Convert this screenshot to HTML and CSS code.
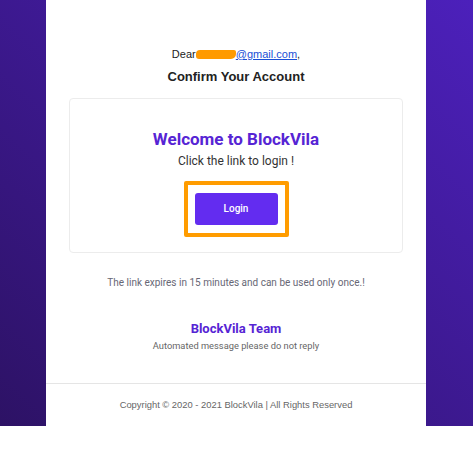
FILE: index.html
```html
<!DOCTYPE html>
<html lang="en">

<head>
  <meta charset="utf-8">
  <title>Confirm Your Account</title>
  <link rel="stylesheet" href="styles.css">
</head>

<body>
  <div class="backdrop">
    <div class="mail">
      <!-- greeting -->
      <p class="dear">Dear <span class="redact"></span><a href="#">@gmail.com</a>,</p>
      <h1 class="confirm">Confirm Your Account</h1>

      <!-- main card -->
      <div class="card">
        <h2 class="welcome">Welcome to BlockVila</h2>
        <p class="click">Click the link to login !</p>
        <div class="mark">
          <a class="login" href="#">Login</a>
        </div>
      </div>

      <p class="expire">The link expires in 15 minutes and can be used only once.!</p>

      <h3 class="team">BlockVila Team</h3>
      <p class="auto">Automated message please do not reply</p>

      <div class="footer">Copyright © 2020 - 2021 BlockVila | All Rights Reserved</div>
    </div>
  </div>
</body>

</html>
```

FILE: styles.css
```css
body {
  margin: 0;
  background: #fff;
  font-family: Roboto, "Liberation Sans", sans-serif;
}

.backdrop {
  height: 426px;
  background: linear-gradient(to top right, #2d1265, #4c20bb);
}

.mail {
  width: 380px;
  height: 426px;
  margin: 0 47px 0 46px;
  background: #fff;
  padding-top: 48px;
  box-sizing: border-box;
  text-align: center;
}

.dear {
  margin: 0;
  font-family: "Liberation Sans", Arial, sans-serif;
  font-size: 11px;
  color: #222;
  line-height: 13px;
}

.dear a {
  color: #1a4fd6;
}

.redact {
  display: inline-block;
  width: 40px;
  height: 9px;
  margin-left: -3px;
  vertical-align: -1px;
  background: #ff9a00;
  border-radius: 4px 2px 5px 3px;
}

.confirm {
  margin: 8px 0 0;
  font-family: "Liberation Sans", Arial, sans-serif;
  font-size: 13px;
  color: #222;
  line-height: 16px;
}

.card {
  margin: 13px 23px 0;
  height: 155px;
  box-sizing: border-box;
  border: 1px solid #ececec;
  border-radius: 4px;
  padding-top: 30px;
}

.welcome {
  margin: 0;
  font-size: 17px;
  line-height: 20px;
  color: #5624d4;
}

.click {
  margin: 5px 0 0;
  font-size: 12px;
  line-height: 15px;
  color: #333;
}

.mark {
  display: inline-block;
  margin-top: 12px;
  padding: 8px 7px;
  border: 4px solid #ff9c00;
  border-radius: 2px;
}

.login {
  display: block;
  width: 83px;
  height: 32px;
  line-height: 32px;
  background: #632cf0;
  border-radius: 3px;
  color: #fff;
  font-size: 10px;
  font-weight: 500;
  text-decoration: none;
}

.expire {
  margin: 23px 0 0;
  font-size: 10px;
  color: #676775;
  line-height: 13px;
}

.team {
  margin: 32px 0 0;
  font-size: 13px;
  line-height: 16px;
  color: #5624d4;
}

.auto {
  margin: 3px 0 0;
  font-size: 9.3px;
  color: #666;
  line-height: 12px;
}

.footer {
  margin-top: 31px;
  border-top: 1px solid #e5e5e5;
  padding-top: 15px;
  font-family: "Liberation Sans", Arial, sans-serif;
  font-size: 9.4px;
  color: #666;
}
```
